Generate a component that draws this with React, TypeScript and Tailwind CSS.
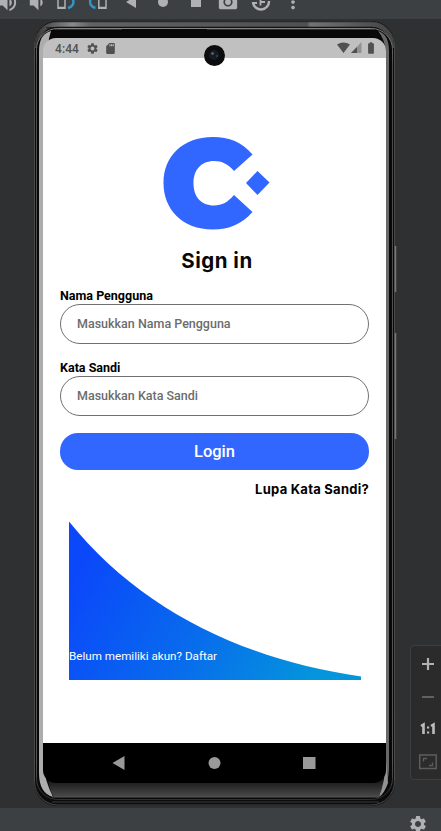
import React from "react";
import { MdSettings, MdSdCard, MdPhotoCamera, MdMoreVert, MdBatteryFull, MdVolumeUp, MdVolumeDown } from "react-icons/md";

function Toolbar() {
  return (
    <header className="h-[19px] shrink-0 overflow-hidden bg-[#3c4042]">
      <div className="relative h-full text-[#afb1b3]">
        <MdVolumeUp className="absolute -left-[4px] -top-[9px]" size={23} />
        <MdVolumeDown className="absolute left-[25px] -top-[9px]" size={23} />
        <svg className="absolute left-0 top-0" width="300" height="19" fill="none">
          <path d="M58 -2V8.300H65V-2M58 7.500H65" stroke="#afb1b3" strokeWidth="1.500" />
          <path d="M68 8c4-1 6.500-4 5-9" stroke="#3592c4" strokeWidth="2.500" />
          <path d="M95.500 8c-4-1-6.500-4-5-9" stroke="#3592c4" strokeWidth="2.500" />
          <path d="M98.800 -2V8.300H106V-2M98.800 7.500H106" stroke="#afb1b3" strokeWidth="1.500" />
          <path d="M126 2l10-6v12z" fill="#afb1b3" />
          <circle cx="163" cy="2" r="5" fill="#afb1b3" />
          <rect x="191" y="-3" width="10" height="10" fill="#afb1b3" />
          <path d="M253 2a8 8 0 0 0 16-1" stroke="#afb1b3" strokeWidth="2.500" />
          <path d="M260.500 -3v8.500M260 2h5" stroke="#afb1b3" strokeWidth="1.800" />
          <path d="M252 3h5" stroke="#afb1b3" strokeWidth="2" />
        </svg>
        <MdPhotoCamera className="absolute left-[217px] -top-[9px]" size={22} />
        <MdMoreVert className="absolute left-[282px] -top-[9px]" size={22} />
      </div>
    </header>
  );
}

function Bezel() {
  return (
    <svg className="absolute left-0 top-0" width="364" height="785" fill="none">
      <defs>
        <linearGradient id="rim" x1="0" y1="0" x2="0" y2="1">
          <stop offset="0" stopColor="#828282" />
          <stop offset=".05" stopColor="#4c4c4c" />
          <stop offset=".95" stopColor="#555" />
          <stop offset="1" stopColor="#303030" />
        </linearGradient>
        <linearGradient id="chin" x1="0" y1="0" x2="0" y2="1">
          <stop offset="0" stopColor="#080808" />
          <stop offset=".5" stopColor="#141414" />
          <stop offset="1" stopColor="#4a4a4a" />
        </linearGradient>
        <linearGradient id="topRim" x1="0" y1="0" x2="1" y2="0">
          <stop offset="0" stopColor="#3a3a3a" />
          <stop offset=".1" stopColor="#8a8a8a" />
          <stop offset=".15" stopColor="#626262" />
          <stop offset=".76" stopColor="#505050" />
          <stop offset=".77" stopColor="#737373" />
          <stop offset="1" stopColor="#444" />
        </linearGradient>
      </defs>
      <rect x="0" y="0" width="361" height="785" rx="24" fill="#0b0b0b" />
      <rect x=".5" y="1" width="360" height="783" rx="23.500" stroke="#4a4a4a" />
      <path d="M3 27C3 12 10 3.500 24 3.500H337C350 3.500 358 13 358 27" stroke="url(#topRim)" strokeWidth="4.500" />
      <path d="M12 6.800H342" stroke="#171717" />
      <rect x="2.500" y="7.500" width="356" height="771" rx="21" fill="#090909" stroke="url(#rim)" />
      <path d="M20 8.500H88M173 8.500H342" stroke="#303030" />
      <path d="M5 30Q5 13 17 10Q15 16 14 24L9 34V740Q10 758 19 776Q5 772 5 752Z" fill="#adadad" />
      <path d="M352 30Q350 17 344 10Q355 13 355 30V748Q354 769 343 776Q350 759 352 744Z" fill="#686868" />
      <path d="M9 740H352Q351 762 345 776H20Q14 768 14 752Z" fill="url(#chin)" />
      <path d="M352 740Q351 762 345 776Q350 773 354 762" fill="#929292" />
      <path d="M18 776H345" stroke="#555" />
      <path d="M18 781H345" stroke="#3c3c3c" />
      <path d="M361.500 225v46M361.500 312v106" stroke="#777" strokeWidth="1.500" />
    </svg>
  );
}

function StatusBar() {
  return (
    <div className="flex h-5 items-center bg-[#c0c0c0] pl-[12px] pr-[11px] text-[#505050]">
      <span className="mt-[2px] text-[12px] font-medium leading-4 tracking-[0.100px]">4:44</span>
      <MdSettings className="ml-[7px]" size={13} />
      <MdSdCard className="ml-[5px]" size={13} />
      <svg className="ml-auto" width="26" height="12">
        <path d="M0 2.500Q6.500-1.500 13 2.500L6.500 11Z" fill="#505050" />
        <path d="M14 11L24.500 0V11Z" fill="#929292" />
        <path d="M14 11L20 5V11Z" fill="#505050" />
      </svg>
      <MdBatteryFull className="-mr-[3px] ml-[1px]" size={14} />
    </div>
  );
}

function Field({ label, placeholder }: { label: string; placeholder: string }) {
  return (
    <label className="block h-[72px]">
      <span className="block h-[15px] text-[12.500px] font-bold leading-[14px] text-black">{label}</span>
      <input
        className="block h-10 w-full rounded-full border border-[#707070] bg-white px-4 pb-[2px] text-[12.500px] font-medium outline-none placeholder:text-[#6c6c6c] placeholder:opacity-100"
        placeholder={placeholder}
      />
    </label>
  );
}

function SignIn() {
  return (
    <main className="flex h-[685px] flex-col bg-white px-[17px] pt-[78px]">
      <svg className="ml-[102px] block shrink-0" width="110" height="95" fill="#3267ff">
        <path d="M90.500 18.500L72 35C66 28 60 25 52 25C39 25 31.500 34 31.500 47C31.500 61 39 69.500 52 69.500C60 69.500 66 66 72 59L90.500 76C80 88 67 93.500 51 93.500C20 93.500 1.500 73 1.500 47C1.500 21 20 1 51 1C67 1 80 6 90.500 18.500Z" />
        <path d="M95.500 35L107.500 46.500L95.500 59L84 47Z" />
      </svg>
      <h1 className="mt-[17px] h-[26px] pl-[5px] text-center font-['Inter'] text-[20.500px] font-bold leading-[26px] tracking-[0.500px] text-[#080808]">Sign in</h1>
      <form className="mt-[15px]" onSubmit={(e) => e.preventDefault()}>
        <Field label="Nama Pengguna" placeholder="Masukkan Nama Pengguna" />
        <Field label="Kata Sandi" placeholder="Masukkan Kata Sandi" />
        <button className="block h-[37px] w-full rounded-[18px] bg-[#3267ff] pt-[2px] text-[16.500px] font-medium text-white">Login</button>
      </form>
      <a className="mt-[11px] block h-4 text-right font-['Inter'] text-[13px] font-bold leading-4 tracking-[0.250px] text-black">Lupa Kata Sandi?</a>
      <div className="relative ml-[9px] mt-[24px] flex h-[159px] w-[292px] items-end">
        <svg className="absolute inset-0" width="292" height="159">
          <defs>
            <linearGradient id="wave" gradientUnits="userSpaceOnUse" x1="10" y1="50" x2="235" y2="175">
              <stop offset="0" stopColor="#0b48fa" />
              <stop offset=".5" stopColor="#086aed" />
              <stop offset="1" stopColor="#0495dc" />
            </linearGradient>
          </defs>
          <path d="M0 .5C70 88 175 139 292 155.500V159H0Z" fill="url(#wave)" />
        </svg>
        <p className="relative mb-[16px] whitespace-nowrap text-[11.650px] leading-4 text-white">Belum memiliki akun? Daftar</p>
      </div>
    </main>
  );
}

function NavBar() {
  return (
    <nav className="h-10 bg-black">
      <svg width="343" height="40" fill="#999">
        <path d="M69.500 20L81.500 13V27Z" />
        <circle cx="171.500" cy="20" r="6" />
        <rect x="260" y="14" width="12.500" height="12" />
      </svg>
    </nav>
  );
}

function Phone() {
  return (
    <div className="relative ml-[34px] mt-[2px] h-[785px] w-[361px] pl-[9px] pt-[17px]">
      <Bezel />
      <div className="relative h-[745px] w-[343px] overflow-hidden rounded-[13px]">
        <StatusBar />
        <SignIn />
        <NavBar />
      </div>
      <svg className="absolute left-[169px] top-[23px]" width="23" height="23">
        <circle cx="11.500" cy="11.500" r="10.500" fill="#0b0c0e" />
        <circle cx="11" cy="11" r="5" fill="#191b23" />
        <circle cx="9.500" cy="9.500" r="1.200" fill="#687087" />
        <circle cx="14" cy="12" r="1" fill="#174a86" />
      </svg>
    </div>
  );
}

function ZoomPanel() {
  return (
    <aside className="absolute left-[410px] top-[626px] flex h-[135px] w-[40px] flex-col rounded-[4px] border border-[#3d3e40] bg-[#2b2b2b]">
      <svg className="ml-px" width="30" height="133" fill="none">
        <path d="M10 18H22M16 12V24" stroke="#afb1b3" strokeWidth="2.200" />
        <path d="M10 51H22" stroke="#606162" strokeWidth="2" />
        <path d="M9 80L11.500 78.500V88M19 80L21.500 78.500V88" stroke="#bcbcbc" strokeWidth="2.600" />
        <path d="M15 80.500h2.200v2H15zM15 85.500h2.200v2H15z" fill="#bcbcbc" />
        <rect x="7.700" y="109" width="16.500" height="13.500" stroke="#5c5d5e" strokeWidth="1.500" />
        <path d="M11.500 115.500V112.500H15M17 119.500H20.500V116.500" stroke="#5c5d5e" strokeWidth="1.300" />
      </svg>
    </aside>
  );
}

export default function App() {
  return (
    <div className="flex h-[831px] w-[441px] flex-col overflow-hidden bg-[#2f3032] font-['Roboto',sans-serif]">
      <Toolbar />
      <section className="relative h-[789px] shrink-0">
        <Phone />
        <ZoomPanel />
      </section>
      <footer className="flex h-[23px] shrink-0 bg-[#3c4042] pl-[408px] pt-[6px] text-[#afb1b3]">
        <MdSettings className="shrink-0" size={20} />
      </footer>
    </div>
  );
}
